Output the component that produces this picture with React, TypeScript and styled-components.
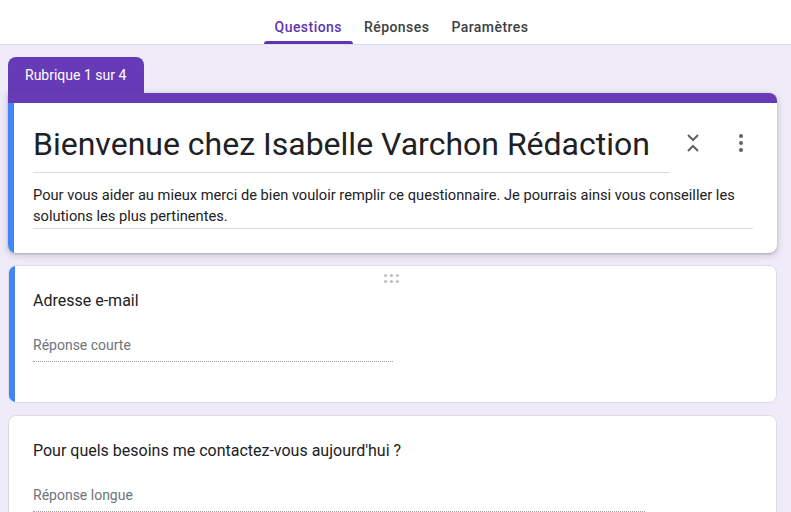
import React from 'react';
import styled, { createGlobalStyle } from 'styled-components';

const GlobalStyle = createGlobalStyle`
  html, body {
    margin: 0;
    padding: 0;
    background: #f0ebf8;
    font-family: Roboto, "Liberation Sans", Arial, sans-serif;
    color: #202124;
    overflow: hidden;
  }
`;

const Page = styled.div`
  width: 791px;
  height: 512px;
  display: flex;
  flex-direction: column;
  overflow: hidden;
`;

const TopBar = styled.nav`
  height: 44px;
  background: #fff;
  border-bottom: 1px solid #dadce0;
  display: flex;
  justify-content: center;
  align-items: stretch;
  padding-left: 12px;
  flex-shrink: 0;
`;

const Tab = styled.div<{ $active?: boolean }>`
  position: relative;
  display: flex;
  align-items: center;
  padding: 10px 11px 0;
  font-size: 14px;
  font-weight: 500;
  letter-spacing: 0.45px;
  color: ${p => (p.$active ? '#5e35b1' : '#3c4043')};

  &::after {
    content: '';
    display: ${p => (p.$active ? 'block' : 'none')};
    position: absolute;
    left: 0;
    right: 0;
    bottom: 0;
    height: 3px;
    border-radius: 3px 3px 0 0;
    background: #5e35b1;
  }
`;

const Content = styled.main`
  padding: 12px 14px 0 8px;
  display: flex;
  flex-direction: column;
  gap: 12px;
`;

const Section = styled.div`
  display: flex;
  flex-direction: column;
`;

const SectionTab = styled.div`
  align-self: flex-start;
  background: #673ab7;
  color: #fff;
  font-size: 14px;
  font-weight: 400;
  padding: 0 17px 0 17px;
  width: 136px;
  box-sizing: border-box;
  height: 36px;
  display: flex;
  align-items: center;
  border-radius: 8px 8px 0 0;
`;

const Card = styled.div<{ $top?: boolean; $focused?: boolean }>`
  position: relative;
  background: #fff;
  border-radius: ${p => (p.$top ? '0 8px 8px 8px' : '8px')};
  border: ${p => (p.$top ? 'none' : '1px solid #dadce0')};
  border-top: ${p => (p.$top ? '10px solid #673ab7' : '1px solid #dadce0')};
  box-shadow: ${p => (p.$top ? '0 1px 2px rgba(60,64,67,.3), 0 2px 6px 2px rgba(60,64,67,.15)' : 'none')};
  padding: ${p => (p.$top ? '18px 24px 24px 25px' : '23px 24px 24px 24px')};
  overflow: hidden;

  &::before {
    content: '';
    display: ${p => (p.$focused ? 'block' : 'none')};
    position: absolute;
    left: 0;
    top: 0;
    bottom: 0;
    width: 6px;
    background: #4285f4;
  }
`;

const TitleRow = styled.div`
  display: flex;
  align-items: flex-start;
`;

const Title = styled.h1`
  flex: 0 0 636px;
  margin: 0;
  font-size: 32px;
  font-weight: 400;
  line-height: 46px;
  padding-bottom: 5px;
  border-bottom: 1px solid #dadce0;
  color: #202124;
`;

const IconRow = styled.div`
  display: flex;
  align-items: center;
  gap: 24px;
  margin-left: 12px;
  margin-top: 10px;
`;

const IconBtn = styled.div`
  width: 24px;
  height: 24px;
  display: flex;
  align-items: center;
  justify-content: center;
  color: #5f6368;
`;

const Description = styled.p`
  margin: 12px 0 0;
  font-size: 14.65px;
  line-height: 21px;
  padding-bottom: 1px;
  border-bottom: 1px solid #dadce0;
  color: #202124;
`;

const DragHandle = styled.div`
  position: absolute;
  top: 8px;
  left: 50%;
  margin-left: -9px;
  display: grid;
  grid-template-columns: repeat(3, 3px);
  gap: 3px;
`;

const Dot = styled.span`
  width: 3px;
  height: 3px;
  border-radius: 50%;
  background: #bdbdbd;
`;

const Question = styled.div`
  font-size: 16px;
  line-height: 24px;
  color: #202124;
`;

const Answer = styled.div<{ $width: number; $gap: number }>`
  width: ${p => p.$width}px;
  margin-top: ${p => p.$gap}px;
  font-size: 14px;
  line-height: 20px;
  color: #70757a;
  padding-bottom: 6px;
  border-bottom: 1px dotted #9aa0a6;
`;

const Spacer = styled.div`
  height: 16px;
`;

const CollapseIcon = () => (
  <svg width="16" height="20" viewBox="0 0 16 20" fill="none" stroke="#5f6368" strokeWidth="2">
    <polyline points="3,2 8,7 13,2" />
    <polyline points="3,18 8,13 13,18" />
  </svg>
);

const MoreIcon = () => (
  <svg width="6" height="20" viewBox="0 0 6 20" fill="#5f6368">
    <circle cx="3" cy="3" r="2" />
    <circle cx="3" cy="10" r="2" />
    <circle cx="3" cy="17" r="2" />
  </svg>
);

export default function App() {
  return (
    <Page>
      <GlobalStyle />
      <TopBar>
        <Tab $active>Questions</Tab>
        <Tab>Réponses</Tab>
        <Tab>Paramètres</Tab>
      </TopBar>
      <Content>
        <Section>
          <SectionTab>Rubrique 1 sur 4</SectionTab>
          <Card $top $focused>
            <TitleRow>
              <Title>Bienvenue chez Isabelle Varchon Rédaction</Title>
              <IconRow>
                <IconBtn><CollapseIcon /></IconBtn>
                <IconBtn><MoreIcon /></IconBtn>
              </IconRow>
            </TitleRow>
            <Description>
              Pour vous aider au mieux merci de bien vouloir remplir ce questionnaire. Je pourrais ainsi vous conseiller les solutions les plus pertinentes.
            </Description>
          </Card>
        </Section>
        <Card $focused>
          <DragHandle>
            {Array.from({ length: 6 }).map((_, i) => <Dot key={i} />)}
          </DragHandle>
          <Question>Adresse e-mail</Question>
          <Answer $width={360} $gap={22}>Réponse courte</Answer>
          <Spacer />
        </Card>
        <Card>
          <Question>Pour quels besoins me contactez-vous aujourd'hui ?</Question>
          <Answer $width={612} $gap={22}>Réponse longue</Answer>
        </Card>
      </Content>
    </Page>
  );
}
